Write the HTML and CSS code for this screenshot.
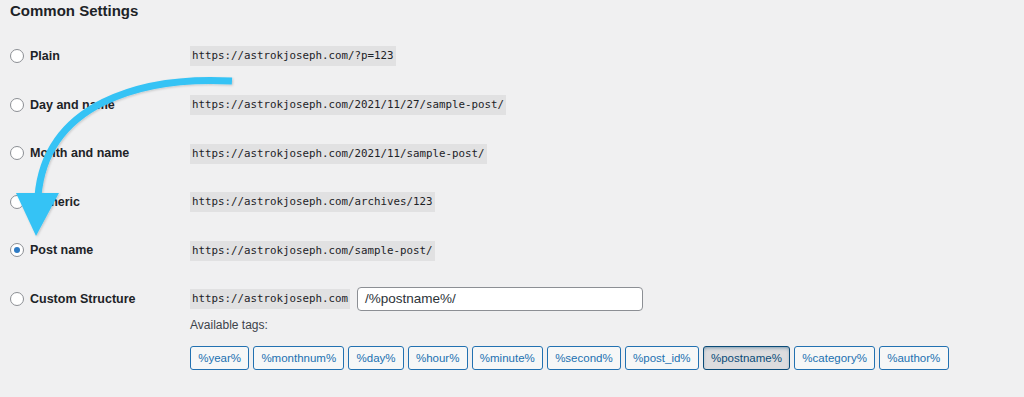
FILE: index.html
```html
<!DOCTYPE html>
<html lang="en">
<head>
  <meta charset="UTF-8">
  <title>Permalink Settings</title>
  <link rel="stylesheet" href="styles.css">
</head>
<body>
  <div class="wrap">
    <h2 class="title">Common Settings</h2>

    <div class="options">
      <div class="row">
        <label class="choice"><span class="radio"></span>Plain</label>
        <div class="value"><code>https://astrokjoseph.com/?p=123</code></div>
      </div>
      <div class="row">
        <label class="choice"><span class="radio"></span>Day and name</label>
        <div class="value"><code>https://astrokjoseph.com/2021/11/27/sample-post/</code></div>
      </div>
      <div class="row">
        <label class="choice"><span class="radio"></span>Month and name</label>
        <div class="value"><code>https://astrokjoseph.com/2021/11/sample-post/</code></div>
      </div>
      <div class="row">
        <label class="choice"><span class="radio"></span>Numeric</label>
        <div class="value"><code>https://astrokjoseph.com/archives/123</code></div>
      </div>
      <div class="row">
        <label class="choice"><span class="radio checked"></span>Post name</label>
        <div class="value"><code>https://astrokjoseph.com/sample-post/</code></div>
      </div>
      <div class="row">
        <label class="choice"><span class="radio"></span>Custom Structure</label>
        <div class="value custom">
          <code>https://astrokjoseph.com</code>
          <div class="text-input">/%postname%/</div>
        </div>
      </div>

      <div class="tags-block">
        <p class="tags-label">Available tags:</p>
        <div class="tags">
          <button class="tag">%year%</button>
          <button class="tag">%monthnum%</button>
          <button class="tag">%day%</button>
          <button class="tag">%hour%</button>
          <button class="tag">%minute%</button>
          <button class="tag">%second%</button>
          <button class="tag">%post_id%</button>
          <button class="tag active">%postname%</button>
          <button class="tag">%category%</button>
          <button class="tag">%author%</button>
        </div>
      </div>
    </div>

    <!-- annotation arrow drawn over the list -->
    <svg class="arrow" width="260" height="250" viewBox="0 0 260 250">
      <defs>
        <filter id="soft" x="-20%" y="-20%" width="140%" height="140%">
          <feDropShadow dx="1" dy="1" stdDeviation="1.2" flood-color="#000" flood-opacity="0.18"/>
        </filter>
      </defs>
      <g filter="url(#soft)">
        <path d="M232 81 C140 76 46 104 38 196" fill="none" stroke="#36c3f5" stroke-width="7"/>
        <polygon points="16,193 59,193 36,236" fill="#36c3f5"/>
      </g>
    </svg>
  </div>
</body>
</html>
```

FILE: styles.css
```css
body {
  margin: 0;
  background-color: #f0f0f1;
  color: #1d2327;
  font-family: "Liberation Sans", Arial, sans-serif;
}

.wrap {
  position: relative;
  padding: 0 10px;
}

.title {
  margin: 0;
  padding-top: 2px;
  height: 29.7px;
  font-size: 15px;
  line-height: 18px;
  font-weight: 600;
  color: #1d2327;
}

.row {
  display: grid;
  grid-template-columns: 180px 1fr;
  align-items: center;
  height: 48.6px;
}

.choice {
  display: flex;
  align-items: center;
  gap: 6px;
  font-size: 12.5px;
  font-weight: 700;
  color: #1d2327;
}

.radio {
  width: 12px;
  height: 12px;
  border: 1px solid #8c8f94;
  border-radius: 50%;
  background-color: #fff;
  display: flex;
  align-items: center;
  justify-content: center;
}

.radio.checked::after {
  content: "";
  width: 6px;
  height: 6px;
  border-radius: 50%;
  background-color: #2e7bc4;
}

code {
  display: inline-block;
  padding: 3px 2px;
  font-family: "DejaVu Sans Mono", "Liberation Mono", monospace;
  font-size: 10.8px;
  line-height: 14px;
  color: #1d2327;
  background-color: #e1e1e2;
}

.value.custom {
  display: flex;
  align-items: center;
  gap: 7px;
}

.text-input {
  width: 270px;
  height: 22px;
  padding: 0 7px;
  border: 1px solid #8c8f94;
  border-radius: 4px;
  background-color: #fff;
  font-size: 13.5px;
  line-height: 22px;
  color: #2c3338;
}

.tags-block {
  padding-left: 180px;
}

.tags-label {
  margin: -6px 0 0;
  font-size: 12px;
  line-height: 16px;
  color: #3c434a;
}

.tags {
  display: flex;
  gap: 4px;
  margin-top: 13px;
}

.tag {
  height: 24px;
  padding: 0 7.2px;
  border: 1px solid #2271b1;
  border-radius: 3px;
  background-color: #f6f7f7;
  color: #2271b1;
  font-family: "Liberation Sans", Arial, sans-serif;
  font-size: 11.5px;
  line-height: 22px;
  cursor: pointer;
}

.tag.active {
  background-color: #dcdcde;
  border-color: #0a4b78;
  color: #0a4b78;
  box-shadow: inset 0 2px 5px -3px #0a4b78;
}

.arrow {
  position: absolute;
  top: 0;
  left: 0;
  pointer-events: none;
}
```
